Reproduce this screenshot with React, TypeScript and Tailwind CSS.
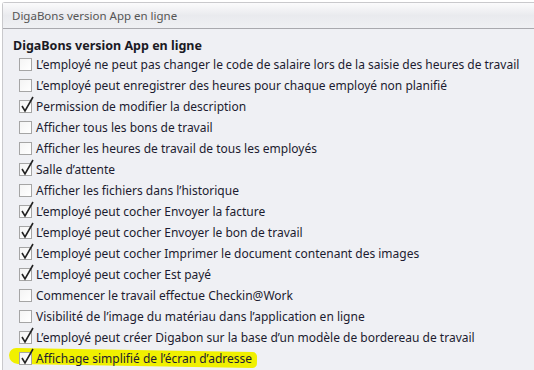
import React from 'react';

const rows: { label: string; checked: boolean }[] = [
  { label: "L\u2019employé ne peut pas changer le code de salaire lors de la saisie des heures de travail", checked: false },
  { label: "L\u2019employé peut enregistrer des heures pour chaque employé non planifié", checked: false },
  { label: 'Permission de modifier la description', checked: true },
  { label: 'Afficher tous les bons de travail', checked: false },
  { label: 'Afficher les heures de travail de tous les employés', checked: false },
  { label: "Salle d\u2019attente", checked: true },
  { label: "Afficher les fichiers dans l\u2019historique", checked: false },
  { label: "L\u2019employé peut cocher Envoyer la facture", checked: true },
  { label: "L\u2019employé peut cocher Envoyer le bon de travail", checked: true },
  { label: "L\u2019employé peut cocher Imprimer le document contenant des images", checked: true },
  { label: "L\u2019employé peut cocher Est payé", checked: true },
  { label: 'Commencer le travail effectue Checkin@Work', checked: false },
  { label: "Visibilité de l\u2019image du matériau dans l\u2019application en ligne", checked: false },
  { label: "L\u2019employé peut créer Digabon sur la base d\u2019un modèle de bordereau de travail", checked: true },
  { label: "Affichage simplifié de l\u2019écran d\u2019adresse", checked: true },
];

const Box: React.FC<{ checked: boolean }> = ({ checked }) => (
  <span className="relative w-[13px] h-[13px] shrink-0 border border-[#a5a5a5] bg-gradient-to-br from-[#f4f4f4] to-white">
    {checked && (
      <svg className="absolute left-[0px] top-[-5px]" width="15" height="17" viewBox="0 0 15 17">
        <path d="M2 10 L5 15 L13 1" fill="none" stroke="#222" strokeWidth="1.6" />
      </svg>
    )}
  </span>
);

const App: React.FC = () => {
  return (
    <div className="w-[534px] h-[370px] bg-white pl-[2px] pt-[2px] overflow-hidden" style={{ fontFamily: '"Noto Sans", sans-serif' }}>
      <div className="h-[380px] border-l border-t border-[#c9c9cc] rounded-tl-[3px] bg-[#eff0f4]">
        <div className="h-[26px] flex items-center pl-[9px] text-[11.5px] text-[#555] border-b border-[#a9a9ae] bg-gradient-to-b from-[#fbfbfc] via-[#e9eaee] to-[#eff0f3]">
          DigaBons version App en ligne
        </div>
        <div className="pl-[10px] pt-[9px]">
          <div className="text-[12.5px] font-bold text-[#1a1a24] leading-[16px]">DigaBons version App en ligne</div>
          <div className="flex flex-col">
            {rows.map((r, i) => (
              <div key={i} className="relative h-[21px] flex items-center gap-[4px] pl-[6px] text-[12px] text-[#1c1c30]">
                {i === rows.length - 1 && (
                  <span className="absolute left-[-4px] top-[2px] w-[248px] h-[16px] bg-[#f0f000] rotate-[1deg] rounded-[8px_5px_5px_10px]" />
                )}
                <span className="relative flex"><Box checked={r.checked} /></span>
                <span className="relative whitespace-nowrap">{r.label}</span>
              </div>
            ))}
          </div>
        </div>
      </div>
    </div>
  );
};

export default App;
